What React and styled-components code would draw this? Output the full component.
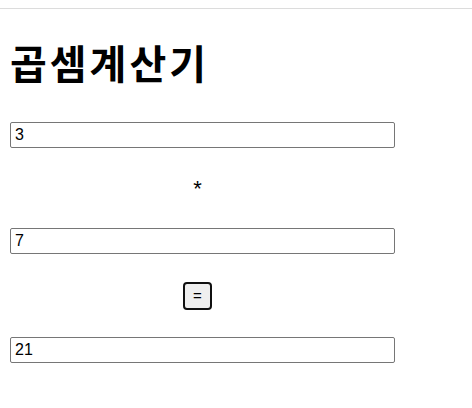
import React, { useState } from "react";
import styled, { createGlobalStyle } from "styled-components";

const Global = createGlobalStyle`
  html, body { margin: 0; padding: 0; background: #fff; }
  body { font-family: "Liberation Sans", Arial, sans-serif; color: #000; }
`;

const TopRule = styled.div`
  margin-top: 8px;
  height: 1px;
  background: #dcdcdc;
`;

const Main = styled.main`
  padding: 0 10px;
  width: 385px;
`;

const Title = styled.h1`
  margin: 0;
  padding-top: 33px;
  height: 113px;
  box-sizing: border-box;
  font-family: "Noto Sans CJK KR", "Noto Sans", sans-serif;
  font-weight: 700;
  font-size: 40px;
  line-height: 1;
  letter-spacing: 3px;
`;

const NumberField = styled.input`
  display: block;
  box-sizing: border-box;
  width: 385px;
  height: 26px;
  margin: 0;
  padding: 1px 4px;
  border: 1px solid #767676;
  border-radius: 2px;
  font-family: "Liberation Sans", Arial, sans-serif;
  font-size: 16px;
  color: #000;
  background: #fff;
  outline: none;
`;

const OpRow = styled.div`
  width: 375px;
  height: ${(p) => p.$h}px;
  display: flex;
  align-items: center;
  justify-content: center;
`;

const Operator = styled.span`
  font-family: "Liberation Sans", Arial, sans-serif;
  font-size: 22px;
  line-height: 1;
  margin-top: 2px;
`;

const EqButton = styled.button`
  box-sizing: border-box;
  width: 29px;
  height: 28px;
  padding: 0;
  border: 2px solid #101010;
  border-radius: 4px;
  background: #efefef;
  font-family: "Liberation Sans", Arial, sans-serif;
  font-size: 15px;
  line-height: 1;
  color: #000;
`;

export default function App() {
  const [a, setA] = useState("3");
  const [b, setB] = useState("7");
  const [r, setR] = useState("21");
  return (
    <>
      <Global />
      <TopRule />
      <Main>
        <Title>곱셈계산기</Title>
        <NumberField value={a} onChange={(e) => setA(e.target.value)} />
        <OpRow $h={80}>
          <Operator>*</Operator>
        </OpRow>
        <NumberField value={b} onChange={(e) => setB(e.target.value)} />
        <OpRow $h={83}>
          <EqButton onClick={() => setR(String(Number(a) * Number(b)))}>=</EqButton>
        </OpRow>
        <NumberField value={r} onChange={(e) => setR(e.target.value)} />
      </Main>
    </>
  );
}
